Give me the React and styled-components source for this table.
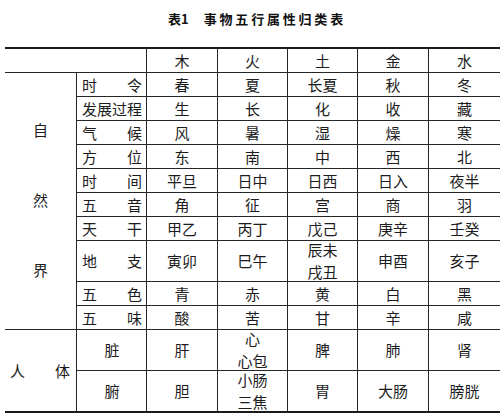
import React from 'react';
import styled, { createGlobalStyle } from 'styled-components';

const ELEMENTS = ['木', '火', '土', '金', '水'];

const NATURE = [
  { label: ['时', '令'], values: ['春', '夏', '长夏', '秋', '冬'] },
  { label: ['发展过程'], values: ['生', '长', '化', '收', '藏'] },
  { label: ['气', '候'], values: ['风', '暑', '湿', '燥', '寒'] },
  { label: ['方', '位'], values: ['东', '南', '中', '西', '北'] },
  { label: ['时', '间'], values: ['平旦', '日中', '日西', '日入', '夜半'] },
  { label: ['五', '音'], values: ['角', '征', '宫', '商', '羽'] },
  { label: ['天', '干'], values: ['甲乙', '丙丁', '戊己', '庚辛', '壬癸'] },
  {
    label: ['地', '支'],
    values: ['寅卯', '巳午', ['辰未', '戌丑'], '申酉', '亥子'],
  },
  { label: ['五', '色'], values: ['青', '赤', '黄', '白', '黑'] },
  { label: ['五', '味'], values: ['酸', '苦', '甘', '辛', '咸'] },
];

const BODY = [
  { label: ['脏'], values: ['肝', ['心', '心包'], '脾', '肺', '肾'] },
  { label: ['腑'], values: ['胆', ['小肠', '三焦'], '胃', '大肠', '膀胱'] },
];

const GlobalStyle = createGlobalStyle`
  html, body {
    margin: 0;
    padding: 0;
    background: #fff;
  }
  body {
    font-family: "Noto Sans CJK SC", "Noto Sans", sans-serif;
    color: #1c1c1c;
  }
`;

const Page = styled.main`
  width: 500px;
  height: 414px;
  overflow: hidden;
`;

const Title = styled.h1`
  margin: 0;
  height: 47px;
  padding: 0 0 10px 14px;
  box-sizing: border-box;
  display: flex;
  align-items: center;
  justify-content: center;
  gap: 15px;
  font-size: 13px;
  font-weight: 700;
  color: #111;
`;

const TitleText = styled.span`
  letter-spacing: 2.8px;
`;

const Grid = styled.div`
  margin-left: 5px;
  width: 495px;
  display: grid;
  grid-template-columns: 71px 69px 70px 69px 69px 70px 71px;
  grid-template-rows: repeat(8, 23px) 40px 23px 23px 40px 40px;
  gap: 1px;
  background: #262626;
  border-top: 2px solid #1a1a1a;
  border-bottom: 2px solid #1a1a1a;
  font-size: 15px;
  line-height: 18px;
`;

const Cell = styled.div`
  background: #fff;
  display: flex;
  flex-direction: column;
  align-items: center;
  justify-content: center;
  text-align: center;
`;

const Line = styled.span`
  display: block;
  line-height: 22px;
`;

const Corner = styled(Cell)`
  grid-column: 1 / 3;
`;

const Category = styled(Cell)`
  grid-row: ${({ $rows }) => $rows};
  flex-direction: ${({ $vertical }) => ($vertical ? 'column' : 'row')};
  justify-content: ${({ $vertical }) => ($vertical ? 'center' : 'space-between')};
  gap: ${({ $vertical }) => ($vertical ? '52px' : '0')};
  padding: ${({ $vertical }) => ($vertical ? '0 0 2px 0' : '0 6px 0 5px')};
`;

const Label = styled(Cell)`
  flex-direction: row;
  justify-content: ${({ $spread }) => ($spread ? 'space-between' : 'center')};
  padding: 0 4px 0 5px;
`;

const renderValue = (value) =>
  Array.isArray(value) ? value.map((line) => <Line key={line}>{line}</Line>) : value;

export default function App() {
  return (
    <Page>
      <GlobalStyle />
      <Title>
        <span>表1</span>
        <TitleText>事物五行属性归类表</TitleText>
      </Title>
      <Grid>
        <Corner />
        {ELEMENTS.map((el) => (
          <Cell key={el}>{el}</Cell>
        ))}

        <Category $rows="2 / 12" $vertical>
          <span>自</span>
          <span>然</span>
          <span>界</span>
        </Category>
        {NATURE.map(({ label, values }) => (
          <React.Fragment key={label.join('')}>
            <Label $spread={label.length > 1}>
              {label.map((ch) => (
                <span key={ch}>{ch}</span>
              ))}
            </Label>
            {values.map((v, i) => (
              <Cell key={i}>{renderValue(v)}</Cell>
            ))}
          </React.Fragment>
        ))}

        <Category $rows="12 / 14">
          <span>人</span>
          <span>体</span>
        </Category>
        {BODY.map(({ label, values }) => (
          <React.Fragment key={label.join('')}>
            <Label>{label[0]}</Label>
            {values.map((v, i) => (
              <Cell key={i}>{renderValue(v)}</Cell>
            ))}
          </React.Fragment>
        ))}
      </Grid>
    </Page>
  );
}
